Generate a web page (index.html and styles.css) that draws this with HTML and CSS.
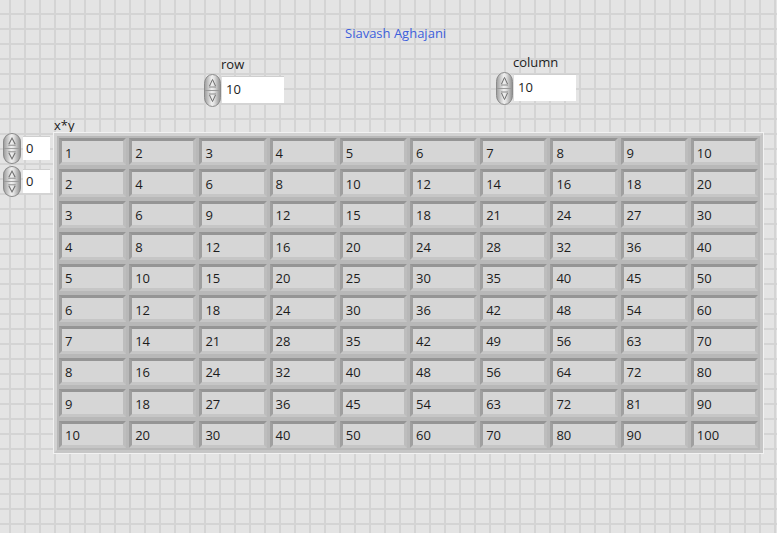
FILE: index.html
```html
<!DOCTYPE html>
<html>
<head>
<meta charset="utf-8">
<link rel="stylesheet" href="styles.css">
</head>
<body>
<div class="panel">
  <div class="title">Siavash Aghajani</div>
  <div class="controls">
    <div class="control control-row">
      <div class="label">row</div>
      <div class="input">
        <svg class="spin" width="17" height="33" viewBox="0 0 17 33"><use href="#spinner"/></svg>
        <div class="num">10</div>
      </div>
    </div>
    <div class="control control-col">
      <div class="label">column</div>
      <div class="input">
        <svg class="spin" width="17" height="33" viewBox="0 0 17 33"><use href="#spinner"/></svg>
        <div class="num">10</div>
      </div>
    </div>
  </div>
  <div class="xy-label">x*y</div>
  <div class="main">
    <div class="index">
      <div class="idx">
        <svg class="spin-s" width="18" height="31" viewBox="0 0 17 33" preserveAspectRatio="none"><use href="#spinner"/></svg>
        <div class="idx-num">0</div>
      </div>
      <div class="idx">
        <svg class="spin-s" width="18" height="31" viewBox="0 0 17 33" preserveAspectRatio="none"><use href="#spinner"/></svg>
        <div class="idx-num">0</div>
      </div>
    </div>
    <div class="array" id="array"></div>
  </div>
</div>

<svg width="0" height="0" style="position:absolute">
  <defs>
    <linearGradient id="pillg" x1="0" x2="1" y1="0" y2="0">
      <stop offset="0" stop-color="#9c9c9c"/>
      <stop offset="0.45" stop-color="#efefef"/>
      <stop offset="0.6" stop-color="#e2e2e2"/>
      <stop offset="1" stop-color="#8e8e8e"/>
    </linearGradient>
    <symbol id="spinner" viewBox="0 0 17 33">
      <rect x="0.5" y="0.5" width="16" height="32" rx="8" ry="9" fill="url(#pillg)" stroke="#8a8a8a"/>
      <line x1="1" y1="16.5" x2="16" y2="16.5" stroke="#9a9a9a"/>
      <path d="M5.5 12 L8.5 5.5 L11.5 12" fill="none" stroke="#6e6e6e" stroke-width="1"/>
      <line x1="5" y1="13" x2="12" y2="13" stroke="#8a8a8a"/>
      <path d="M5.5 21 L8.5 27.5 L11.5 21" fill="none" stroke="#6e6e6e" stroke-width="1"/>
      <line x1="5" y1="20" x2="12" y2="20" stroke="#8a8a8a"/>
    </symbol>
  </defs>
</svg>

<script src="script.js"></script>
</body>
</html>
```

FILE: script.js
```js
(function () {
  var arr = document.getElementById('array');
  var html = '';
  for (var r = 1; r <= 10; r++) {
    for (var c = 1; c <= 10; c++) {
      html += '<div class="cell">' + (r * c) + '</div>';
    }
  }
  arr.innerHTML = html;
})();
```

FILE: styles.css
```css
html, body {
  margin: 0;
  padding: 0;
}
body {
  font-family: "Open Sans", "Noto Sans", sans-serif;
  font-size: 13px;
  color: #1c1c1c;
}
.panel {
  width: 777px;
  height: 533px;
  overflow: hidden;
  background-color: #e4e4e4;
  background-image:
    linear-gradient(to right, transparent 9px, #d4d4d4 9px, #d4d4d4 11px, transparent 11px),
    linear-gradient(to bottom, transparent 13px, #d4d4d4 13px, #d4d4d4 15px, transparent 15px);
  background-size: 15px 15px;
}
.title {
  padding: 25px 0 0 345px;
  line-height: 16px;
  height: 16px;
  color: #3d5fdc;
}
.controls {
  display: flex;
  align-items: flex-start;
  margin-top: 13px;
  padding-left: 204px;
  gap: 212px;
}
.control {
  display: flex;
  flex-direction: column;
}
.control-row {
  margin-top: 2px;
}
.label {
  line-height: 16px;
  height: 16px;
  padding-left: 17px;
  color: #1c1c1c;
}
.input {
  display: flex;
  align-items: flex-start;
  margin-top: 2px;
}
.spin {
  display: block;
}
.num {
  margin-top: 2px;
  width: 63px;
  height: 27px;
  box-sizing: border-box;
  background: #fff;
  border-top: 1px solid #cfcfcf;
  border-left: 1px solid #dedede;
  padding-left: 4px;
  line-height: 25px;
}
.xy-label {
  margin-top: 10px;
  padding-left: 54px;
  line-height: 16px;
  height: 16px;
}
.main {
  display: flex;
  align-items: flex-start;
  padding-left: 3px;
}
.index {
  width: 51px;
  display: flex;
  flex-direction: column;
  gap: 2px;
}
.idx {
  display: flex;
  align-items: flex-start;
}
.spin-s {
  display: block;
}
.idx-num {
  margin: 3px 0 0 2px;
  width: 27px;
  height: 24px;
  box-sizing: border-box;
  background: #fff;
  border-top: 1px solid #cfcfcf;
  padding-left: 3px;
  line-height: 23px;
}
.array {
  width: 709px;
  height: 320px;
  box-sizing: border-box;
  border: 3px solid;
  border-color: #d2d2d2 #c6c6c6 #c6c6c6 #d2d2d2;
  outline: 1px solid #f2f2f2;
  background: #b8b8b8;
  padding: 2px;
  display: grid;
  grid-template-columns: repeat(10, 1fr);
  grid-template-rows: repeat(10, 1fr);
  column-gap: 3px;
  row-gap: 4px;
}
.cell {
  box-sizing: border-box;
  border: 3px solid;
  border-color: #959595 #bdbdbd #c6c6c6 #9f9f9f;
  background: #d6d6d6;
  padding-left: 3px;
  display: flex;
  align-items: center;
  line-height: 16px;
  padding-top: 2px;
}
```
